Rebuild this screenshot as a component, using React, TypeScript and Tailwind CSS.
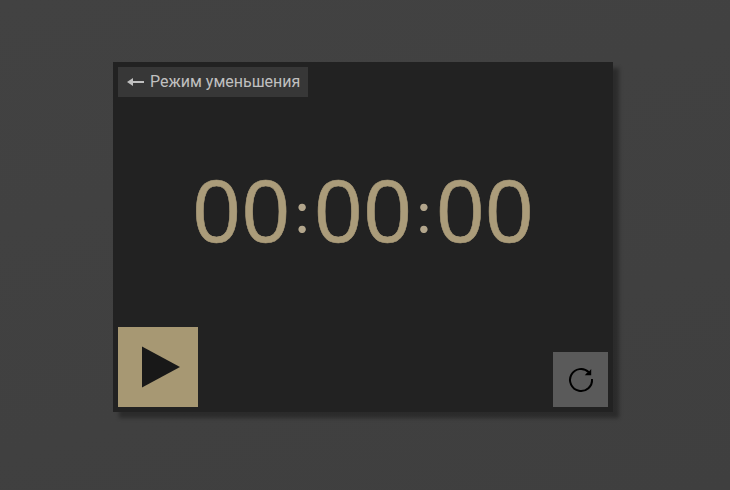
function Colon() {
  return (
    <span className="inline-block w-[23.5px] text-center align-[9px] font-[Lato,sans-serif] text-[59px] leading-none text-[#b3a68c] [-webkit-text-stroke:0px]">:</span>
  );
}

export default function App() {
  return (
    <main className="flex h-[490px] w-[730px] bg-linear-165 from-[#424242] to-[#3f3f3f] pt-[62px] pl-[113px] font-[Roboto,sans-serif]">
      <section className="flex h-[350px] w-[500px] flex-col justify-between bg-[#222222] p-[5px] shadow-[6px_6px_4px_rgba(0,0,0,0.33)]">
        <button className="flex h-[30px] w-[190px] items-center bg-[#373737] pl-2 text-base text-[#c0c0c0]">
          <svg className="mr-[5px] h-[10px] w-[19px]" viewBox="0 0 19 10" fill="currentColor">
            <path d="M1 5 7 1v3h11v2H7v3z" />
          </svg>
          <span className="whitespace-nowrap">Режим уменьшения</span>
        </button>
        <div className="h-[100px] text-center font-['Open_Sans',sans-serif] text-[86px] leading-[94px] whitespace-nowrap text-[#ab9c7a] [-webkit-text-stroke:0.6px_#ab9c7a]">
          00<Colon />00<Colon />00
        </div>
        <div className="flex items-end justify-between">
          <button aria-label="Start" className="flex size-20 bg-[#a79873]">
            <svg className="size-20" viewBox="0 0 80 80" fill="#181818">
              <path d="M24 19.5 62 40 24 60.5z" />
            </svg>
          </button>
          <button aria-label="Reset" className="flex size-[55px] bg-[#5a5a5a]">
            <svg className="size-[55px]" viewBox="0 0 55 55">
              <path d="M39 27A11 11 0 1 1 35.8 20.2" fill="none" stroke="#000" strokeWidth="2" />
              <path d="M38.2 17v6.2h-6.4l2-2.2 1.8-1z" />
            </svg>
          </button>
        </div>
      </section>
    </main>
  );
}
